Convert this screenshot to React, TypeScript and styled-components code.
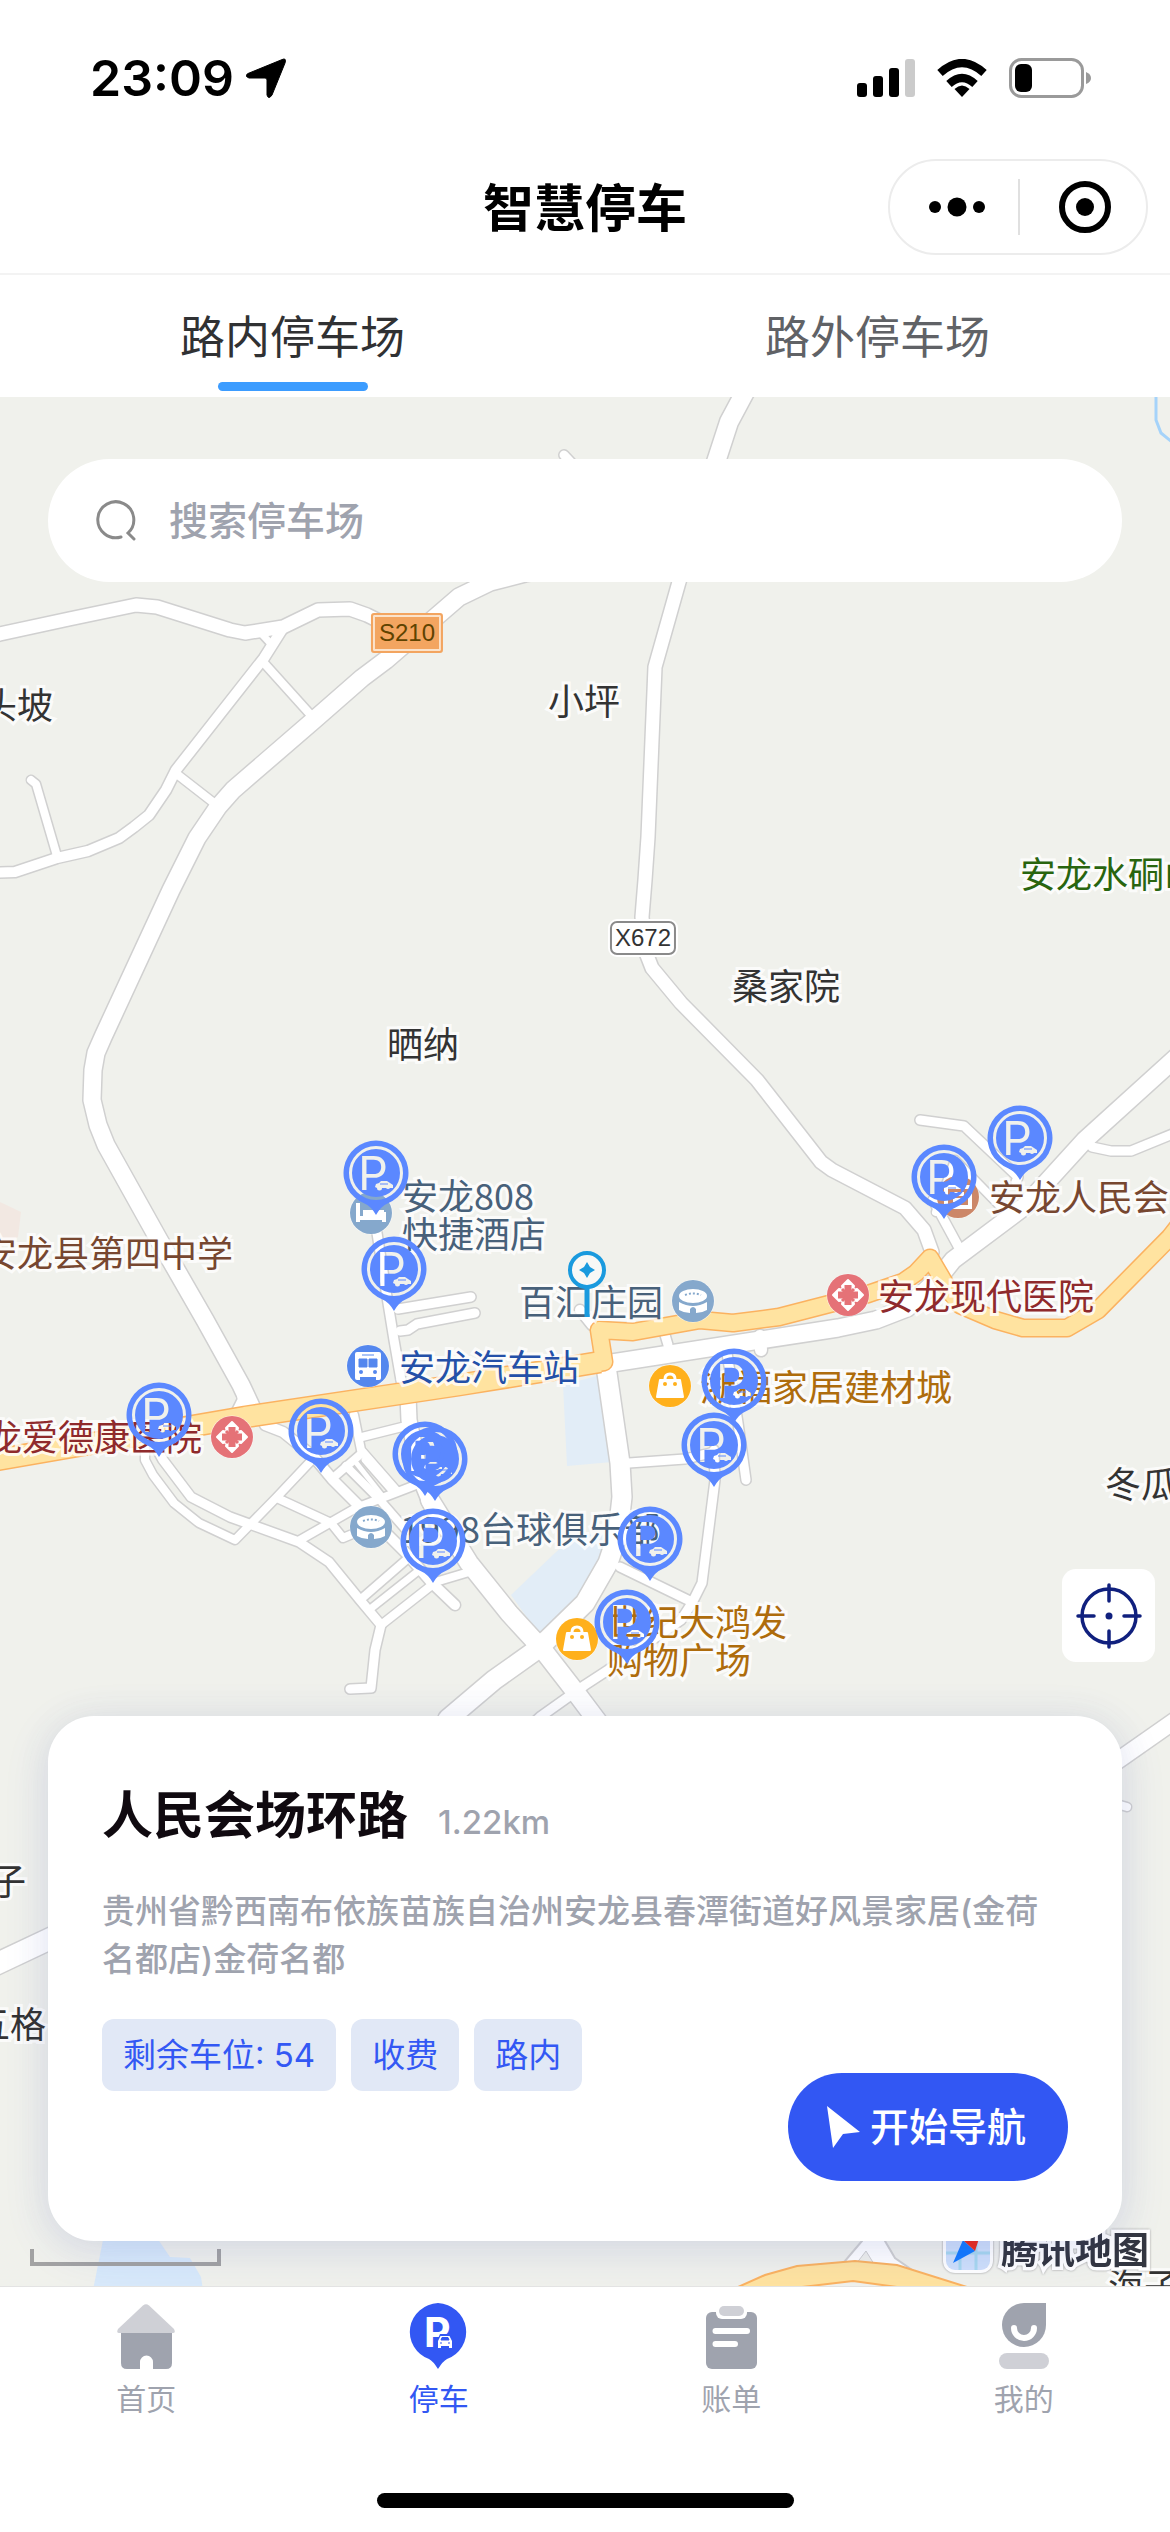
import React from "react";
import styled, { createGlobalStyle } from "styled-components";

const GlobalStyle = createGlobalStyle`
  *, *::before, *::after { box-sizing: border-box; }
  body {
    margin: 0;
    background: #fff;
    font-family: Inter, "Noto Sans CJK SC", sans-serif;
    color: #000;
  }
  button, input { font: inherit; }
  button { border: 0; padding: 0; background: none; cursor: pointer; }
`;

const MAP_WIDTH = 1170;
const MAP_TOP = 397;
const MAP_HEIGHT = 1889;

/* ---------- page frame ---------- */

const Page = styled.div`
  display: flex;
  flex-direction: column;
  min-height: 100vh;
`;

const StatusBar = styled.div`
  display: flex;
  align-items: center;
  justify-content: space-between;
  height: 156px;
  padding: 0 79px 0 90px;
`;

const Clock = styled.div`
  display: flex;
  align-items: center;
  gap: 12px;
  font-size: 50px;
  line-height: 60px;
  font-weight: 600;
`;

const StatusIcons = styled.div`
  display: flex;
  align-items: center;
  gap: 22px;
`;

const NavBar = styled.header`
  display: grid;
  grid-template-columns: 1fr auto 1fr;
  align-items: center;
  height: 119px;
  padding: 0 22px 15px;
  border-bottom: 2px solid #f3f3f3;
`;

const NavTitle = styled.h1`
  grid-column: 2;
  margin: 0;
  padding-top: 4px;
  font-size: 51px;
  line-height: 72px;
  font-weight: 700;
`;

const Capsule = styled.div`
  justify-self: end;
  display: flex;
  align-items: center;
  width: 260px;
  height: 96px;
  border: 2px solid #ececec;
  border-radius: 48px;
`;

const CapsuleButton = styled.button`
  flex: 1;
  display: flex;
  align-items: center;
  justify-content: center;
  height: 100%;
  padding-left: 6px;
  & + & { position: relative; }
  & + &::before {
    content: "";
    position: absolute;
    left: 0;
    top: 18px;
    bottom: 18px;
    width: 2px;
    background: #e0e0e0;
  }
`;

const Tabs = styled.nav`
  display: flex;
`;

const Tab = styled.button<{ $active?: boolean }>`
  flex: 1;
  display: flex;
  flex-direction: column;
  align-items: center;
  justify-content: space-between;
  height: 122px;
  padding: 33px 0 6px;
  font-size: 45px;
  line-height: 60px;
  color: ${(p) => (p.$active ? "#303133" : "#606266")};
  &::after {
    content: "";
    width: 150px;
    height: 9px;
    border-radius: 5px;
    background: ${(p) => (p.$active ? "#3c9cff" : "transparent")};
  }
`;

/* ---------- map ---------- */

const MapSection = styled.main`
  position: relative;
  flex: 1;
  display: flex;
  overflow: hidden;
  background: #f0f1ec;
`;

const MapCanvas = styled.div`
  position: absolute;
  inset: 0;
`;

const Roads = styled.svg`
  display: block;
  width: 100%;
  height: 100%;
`;

const Place = styled.div<{ $x: number; $y: number; $center?: boolean }>`
  position: absolute;
  left: ${(p) => (p.$x / MAP_WIDTH) * 100}%;
  top: ${(p) => ((p.$y - MAP_TOP) / MAP_HEIGHT) * 100}%;
  transform: translate(${(p) => (p.$center ? "-50%" : "0")}, -50%);
  display: flex;
`;

const MapLabel = styled.span<{ $color: string }>`
  padding-bottom: 6px;
  font-family: "Noto Sans CJK SC", sans-serif;
  font-size: 36px;
  line-height: 38px;
  white-space: pre;
  color: ${(p) => p.$color};
  -webkit-text-stroke: 6px rgba(255, 255, 255, 0.8);
  paint-order: stroke fill;
`;

const RoadBadge = styled.span<{ $major?: boolean }>`
  display: flex;
  align-items: center;
  justify-content: center;
  font-family: "Liberation Sans", Arial, sans-serif;
  font-size: 24px;
  line-height: 24px;
  ${(p) =>
    p.$major
      ? `padding: 6px;
         color: #5f4300;
         background: #f3a560;
         border: 2px solid #f3a560;
         border-radius: 3px;
         box-shadow: inset 0 0 0 2px #fbe3cb;`
      : `padding: 3px;
         color: #333;
         background: #fff;
         border: 2px solid #8a8a8a;
         border-radius: 7px;
         box-shadow: 0 0 0 2px #fff;`}
`;

const MapBrand = styled.div`
  display: flex;
  align-items: center;
  gap: 7px;
  font-family: "Noto Sans CJK SC", sans-serif;
  font-size: 37px;
  line-height: 48px;
  font-weight: 700;
  color: #333640;
  white-space: nowrap;
  -webkit-text-stroke: 7px #fff;
  paint-order: stroke fill;
  filter: drop-shadow(0 0 1px #999);
`;

const MapOverlay = styled.div`
  position: relative;
  flex: 1;
  display: flex;
  flex-direction: column;
  padding: 62px 15px 45px;
`;

const SearchBox = styled.label`
  display: flex;
  align-items: center;
  gap: 32px;
  height: 123px;
  margin: 0 33px;
  padding: 0 48px;
  border-radius: 62px;
  background: #fff;
`;

const SearchInput = styled.input`
  flex: 1;
  min-width: 0;
  border: 0;
  padding: 0;
  outline: none;
  background: transparent;
  font-size: 39px;
  line-height: 54px;
  font-weight: 500;
  &::placeholder { color: #9fa3ae; opacity: 1; }
`;

const LocateButton = styled.button`
  align-self: flex-end;
  display: flex;
  align-items: center;
  justify-content: center;
  width: 93px;
  height: 93px;
  margin-top: auto;
  margin-bottom: 54px;
  border-radius: 14px;
  background: #fff;
`;

/* ---------- parking card ---------- */

const Card = styled.section`
  margin: 0 33px;
  padding: 64px 54px 60px;
  border-radius: 46px;
  background: #fff;
  box-shadow: 0 9px 45px rgba(50, 70, 200, 0.13), 0 0 36px rgba(120, 120, 120, 0.06);
`;

const CardHead = styled.div`
  display: flex;
  align-items: baseline;
  gap: 30px;
`;

const CardTitle = styled.h2`
  margin: 0;
  font-size: 51px;
  line-height: 72px;
  font-weight: 700;
  color: #100a10;
`;

const Distance = styled.span`
  font-size: 33px;
  line-height: 48px;
  font-weight: 500;
  color: #9fa3ae;
`;

const Address = styled.p`
  margin: 35px 0 36px;
  font-size: 33px;
  line-height: 48px;
  font-weight: 500;
  color: #9fa3ae;
`;

const CardFoot = styled.div`
  display: flex;
  align-items: flex-start;
  justify-content: space-between;
`;

const Tags = styled.div`
  display: flex;
  gap: 15px;
`;

const Tag = styled.span`
  padding: 12px 21px;
  border-radius: 12px;
  background: #e1e8f6;
  color: #3358f4;
  font-size: 33px;
  line-height: 48px;
  white-space: nowrap;
`;

const NavigateButton = styled.button`
  display: flex;
  align-items: center;
  gap: 10px;
  height: 108px;
  margin-top: 54px;
  padding: 0 42px 0 39px;
  border-radius: 54px;
  background: #3257f3;
  color: #fff;
  font-size: 39px;
  line-height: 54px;
  font-weight: 500;
`;

/* ---------- bottom bar ---------- */

const BottomBar = styled.footer`
  display: flex;
  flex-direction: column;
  align-items: center;
  justify-content: space-between;
  height: 246px;
  padding-bottom: 24px;
  border-top: 1px solid #e3e3e3;
  background: #fff;
`;

const BottomNav = styled.nav`
  display: flex;
  align-self: stretch;
  padding-top: 16px;
`;

const BottomLink = styled.a<{ $active?: boolean }>`
  flex: 1;
  display: flex;
  flex-direction: column;
  align-items: center;
  gap: 9px;
  font-size: 30px;
  line-height: 42px;
  text-decoration: none;
  color: ${(p) => (p.$active ? "#3257f3" : "#9fa3ae")};
`;

const HomeIndicator = styled.div`
  width: 417px;
  max-width: 60%;
  height: 15px;
  border-radius: 8px;
  background: #000;
`;

/* ---------- map data ---------- */

const INK = "#333";
const BROWN = "#774730";
const SLATE = "#48617a";
const MAROON = "#8f2a2c";
const AMBER = "#ae6c0c";

const labels = [
  { x: -19, y: 706, color: INK, text: "头坡" },
  { x: 548, y: 702, color: INK, text: "小坪" },
  { x: 1020, y: 875, color: "#29650f", text: "安龙水硐山" },
  { x: 732, y: 987, color: INK, text: "桑家院" },
  { x: 387, y: 1045, color: INK, text: "晒纳" },
  { x: 402, y: 1216, color: SLATE, text: "安龙808\n快捷酒店" },
  { x: -19, y: 1254, color: BROWN, text: "安龙县第四中学" },
  { x: 519, y: 1303, color: SLATE, text: "百汇庄园" },
  { x: 399, y: 1368, color: "#2450a8", text: "安龙汽车站" },
  { x: 989, y: 1198, color: BROWN, text: "安龙人民会" },
  { x: 878, y: 1297, color: MAROON, text: "安龙现代医院" },
  { x: -50, y: 1438, color: MAROON, text: "安龙爱德康医院" },
  { x: 700, y: 1388, color: AMBER, text: "浙福家居建材城" },
  { x: 400, y: 1530, color: SLATE, text: "1998台球俱乐部" },
  { x: 1105, y: 1485, color: INK, text: "冬瓜" },
  { x: 607, y: 1642, color: AMBER, text: "世纪大鸿发\n购物广场" },
  { x: -10, y: 1882, color: INK, text: "子" },
  { x: -26, y: 2025, color: INK, text: "五格" },
  { x: 1108, y: 2287, color: INK, text: "海子" },
];

type PoiKind = "hotel" | "venue" | "bus" | "hospital" | "shop" | "hall";

const pois: { x: number; y: number; kind: PoiKind }[] = [
  { x: 371, y: 1213, kind: "hotel" },
  { x: 693, y: 1301, kind: "venue" },
  { x: 371, y: 1527, kind: "venue" },
  { x: 368, y: 1366, kind: "bus" },
  { x: 848, y: 1295, kind: "hospital" },
  { x: 232, y: 1437, kind: "hospital" },
  { x: 670, y: 1386, kind: "shop" },
  { x: 577, y: 1639, kind: "shop" },
  { x: 958, y: 1197, kind: "hall" },
];

const pins = [
  [376, 1173], [394, 1269], [1020, 1138], [944, 1177], [159, 1415], [321, 1431],
  [425, 1454], [435, 1459], [433, 1541], [734, 1381], [714, 1445], [650, 1539], [627, 1622],
];

/* [path, road width] */
const roads: [string, number][] = [
  ["M-10 636L0 634L69 619L136 605L157 607L230 630L245 633L283 627L318 610L350 609L367 615L383 623L405 640", 13],
  ["M283 628L264 658L176 770L166 790L149 815L134 827L119 838L88 851L57 858L15 872L-10 873", 10],
  ["M260 632L272 645", 7],
  ["M264 663L309 713", 8],
  ["M178 775L214 803", 8],
  ["M31 780L36 784L57 856", 8],
  ["M564 455L580 472", 9],
  ["M1016 1182L1018 1177L964 1126L920 1120", 9],
  ["M936 1212L955 1160L1000 1206", 8],
  ["M933 1200L958 1246", 9],
  ["M1086 1138L1092 1147L1111 1151L1131 1151L1180 1131", 9],
  ["M377 1233L387 1297L394 1340L402 1386", 9],
  ["M398 1309L471 1297", 9],
  ["M400 1331L408 1330L417 1324L475 1313", 9],
  ["M241 1385L241 1400L235 1412", 7],
  ["M145 1440L145 1460L153 1475L174 1503L199 1523L235 1540L276 1498L310 1462", 8],
  ["M152 1440L163 1460L191 1497L230 1517L299 1542L329 1562L360 1600L381 1625L375 1650L371 1688L350 1689", 9],
  ["M277 1498L331 1523L343 1538L362 1530", 8],
  ["M300 1540L356 1508L421 1483", 8],
  ["M354 1415L361 1450L396 1490", 8],
  ["M362 1437L406 1426", 8],
  ["M362 1453L333 1478", 8],
  ["M346 1466L380 1500L406 1530", 8],
  ["M354 1460L384 1498", 5],
  ["M364 1460L392 1492", 5],
  ["M406 1560L360 1600", 8],
  ["M417 1572L369 1610", 7],
  ["M432 1585L381 1625", 8],
  ["M432 1583L469 1572", 8],
  ["M265 1425L283 1432L314 1457L333 1480L360 1507L406 1553L432 1583L455 1605", 10],
  ["M629 1463L685 1459L715 1452", 9],
  ["M727 1353L738 1423L746 1480", 9],
  ["M714 1450L715 1480L702 1583L692 1603L681 1620L608 1670L585 1685L540 1717L520 1735", 9],
  ["M620 1567L692 1602", 9],
  ["M663 1328L668 1345", 9],
  ["M760 1336L761 1350", 12],
  ["M580 1310L592 1325", 10],
  ["M408 1396L409 1420L421 1480L432 1507L469 1563", 15],
  ["M1120 1805L1127 1807", 8],
];

const mainRoads: [string, number][] = [
  ["M600 560L525 573L490 582L459 597L430 622L386 660L362 678L314 720L233 790L218 807L197 838L171 890L103 1037L96 1053L93 1070L92 1100L98 1125L106 1145L159 1240L205 1320L241 1385L255 1415", 17],
  ["M745 392L729 422L715 465", 18],
  ["M716 462L679 582L655 667L648 837L645 880L642 917L645 950L652 968L681 1003L757 1080L821 1162L832 1170L905 1208L924 1230L932 1252", 13],
  ["M1180 1054L1085 1140L1025 1206L953 1260L937 1280L907 1308L876 1320L838 1328L612 1363", 17],
  ["M606 1366L620 1463L622 1497L618 1533L608 1563L585 1603L547 1640L532 1653L494 1680L448 1719", 19],
  ["M430 1500L469 1563L509 1613L543 1650L574 1690L598 1722", 18],
  ["M1180 1717L1110 1766", 16],
  ["M-10 1967L60 1934", 21],
];

/* ---------- drawings ---------- */

function PoiIcon({ kind }: { kind: PoiKind }) {
  const fill = { hotel: "#85a8cc", venue: "#85a8cc", bus: "#5487ee", hospital: "#e57277", shop: "#ffb01c", hall: "#cc8768" }[kind];
  return (
    <svg width="44" height="44" viewBox="-22 -22 44 44" aria-hidden="true">
      <circle r="21.5" fill="#fff" opacity=".7" />
      <circle r="21" fill={fill} />
      {kind === "hotel" && (
        <path d="M-13 -10V9M-13 5H13M13 9V-1" stroke="#fff" strokeWidth="4" fill="none" />
      )}
      {kind === "hotel" && <path d="M-8 -3H13V6H-8Z" fill="#fff" />}
      {kind === "venue" && (
        <g fill="#fff">
          <ellipse cy="-5" rx="14" ry="7" />
          <path d="M-14 1Q0 9 14 1V9Q9 12 3 12V8Q0 4 -3 8V12Q-9 12 -14 9Z" />
          <path d="M-8 -6Q0 -9 8 -6" stroke={fill} strokeWidth="2" strokeDasharray="2 2" fill="none" />
        </g>
      )}
      {kind === "bus" && (
        <g>
          <path d="M-11 -14H11Q13 -14 13 -12V12Q13 14 11 14H8V11H-8V14H-11Q-13 14 -13 12V-12Q-13 -14 -11 -14Z" fill="#fff" />
          <path d="M-6 -11H6M-9 -7H-1V1H-9ZM1 -7H9V1H1Z" fill={fill} stroke={fill} strokeWidth="1" />
          <circle cx="-7" cy="6" r="2" fill={fill} />
          <circle cx="7" cy="6" r="2" fill={fill} />
        </g>
      )}
      {kind === "hospital" && (
        <g>
          <path d="M0 -15L6 -9L5 -5L9 -6L15 0L9 6L5 5L6 9L0 15L-6 9L-5 5L-9 6L-15 0L-9 -6L-5 -5L-6 -9Z" fill="#fff" stroke="#fff" strokeWidth="2" strokeLinejoin="round" />
          <path d="M0 -10V10M-10 0H10" stroke={fill} strokeWidth="7" />
          <path d="M-6 -6L6 6M6 -6L-6 6" stroke={fill} strokeWidth="3" />
        </g>
      )}
      {kind === "shop" && (
        <g>
          <path d="M-10 -6H10L13 11H-13Z" fill="#fff" stroke="#fff" strokeWidth="2" strokeLinejoin="round" />
          <path d="M-5 -7Q-5 -12 0 -12Q5 -12 5 -7" fill="none" stroke="#fff" strokeWidth="3" />
          <circle cx="-5" cy="-2" r="2" fill={fill} />
          <circle cx="5" cy="-2" r="2" fill={fill} />
        </g>
      )}
      {kind === "hall" && (
        <path d="M-12 -10H12V10H-12ZM-6 -3H6M-5 3H5" fill="none" stroke="#fff" strokeWidth="4" />
      )}
    </svg>
  );
}

function ParkingPin() {
  return (
    <svg width="66" height="82" viewBox="-33 -33 66 82" aria-hidden="true">
      <g mask="url(#pin-cutout)">
        <path d="M0 -32.500A32.500 32.500 0 0 1 12 30.200Q5 33 0 42Q-5 33 -12 30.200A32.500 32.500 0 0 1 0 -32.500Z" fill="#5b88ff" />
      </g>
    </svg>
  );
}

function MapDrawing() {
  return (
    <Roads viewBox={`0 ${MAP_TOP} ${MAP_WIDTH} ${MAP_HEIGHT}`} preserveAspectRatio="none" aria-hidden="true">
      <defs>
        <mask id="pin-cutout" maskUnits="userSpaceOnUse" x="-34" y="-34" width="68" height="84">
          <rect x="-34" y="-34" width="68" height="84" fill="#fff" />
          <circle r="25.500" fill="none" stroke="#000" strokeWidth="3" />
          <text x="-18" y="17" fontFamily="Inter, sans-serif" fontSize="47" fontWeight="400" fill="#000">P</text>
          <path d="M-1 14L0 11L3 10L5 8H11L14 10L17 12V15H14A2.500 2.500 0 0 1 10 15H6A2.500 2.500 0 0 1 1 15Z" fill="#000" />
          <path d="M4 11H12" stroke="#fff" strokeWidth="1" />
        </mask>
      </defs>

      <g fill="#e2edf7">
        <path d="M563 1385L567 1466L612 1462L600 1375Z" />
        <path d="M511 1595L555 1553L575 1535L615 1533L612 1570L585 1610L543 1640Z" />
        <path d="M104 2235H155L170 2257L190 2258L201 2277L203 2290H93Z" fill="#d8e9fa" />
      </g>
      <path d="M0 1202L21 1212L18 1237L0 1248Z" fill="#f2e8e2" />
      <path d="M1156 390V420L1161 433L1172 442" fill="none" stroke="#a5d3fa" strokeWidth="3" />

      <g fill="none" stroke="#d0d0d0" strokeLinejoin="round" strokeLinecap="round">
        {[...roads, ...mainRoads].map(([d, w], i) => (
          <path key={i} d={d} strokeWidth={w + 3} />
        ))}
      </g>
      <g fill="none" stroke="#fff" strokeLinejoin="round" strokeLinecap="round">
        {[...roads, ...mainRoads].map(([d, w], i) => (
          <path key={i} d={d} strokeWidth={w} />
        ))}
      </g>

      <path d="M858 2230L862 2241L845 2261L830 2272H915L895 2258L885 2241L880 2230Z" fill="#fff" stroke="#d0d0d0" strokeWidth="2" />
      <path d="M866 2251L856 2264H874Z" fill="#f0f1ec" stroke="#d0d0d0" strokeWidth="1" />

      <g fill="none" strokeLinejoin="round">
        {["#fbb260", "#ffe3a0"].map((c, i) => (
          <g key={c} stroke={c}>
            <path strokeWidth={i ? 16 : 19} strokeLinecap="round" d="M1180 1224L1170 1237L1098 1310L1067 1328L1023 1328L995 1320L960 1305L947 1287L930 1258L916 1273L903 1282L868 1294L779 1317L733 1323L700 1320L633 1332L599 1330L604 1362L570 1367" />
            <path strokeWidth={i ? 20 : 23} d="M-10 1461L245 1417L459 1385L570 1367L600 1362" />
          </g>
        ))}
      </g>
      <path d="M738 2287L765 2275L797 2266L855 2261L897 2265L967 2287H897L853 2281L802 2287Z" fill="#ffe3a0" stroke="#fbb260" strokeWidth="2" />
      <path d="M32 2249V2264H219V2249" fill="none" stroke="#a3a3a3" strokeWidth="4" />
    </Roads>
  );
}

function CurrentPosition() {
  return (
    <svg width="40" height="68" viewBox="0 0 40 68" aria-hidden="true">
      <circle cx="20" cy="20" r="17" fill="#fff" fillOpacity=".5" stroke="#1a9ade" strokeWidth="4" />
      <path d="M20 12L23 17L28 20L23 23L20 28L17 23L12 20L17 17Z" fill="#1a9ade" />
      <path d="M20 38V67" stroke="#1a9ade" strokeWidth="5" />
    </svg>
  );
}

function BrandMark() {
  return (
    <svg width="52" height="52" viewBox="0 0 52 52" aria-hidden="true">
      <rect x="1" y="1" width="50" height="50" rx="12" fill="#fff" />
      <rect x="4" y="4" width="44" height="44" rx="9" fill="#cfe0fb" />
      <path d="M4 31H48M34 4V48M18 31V48" stroke="#a8d8f0" strokeWidth="3" />
      <path d="M11 41L21 18L33 29Z" fill="#147aff" />
      <path d="M21 18L41 4L33 29Z" fill="#ee2a18" />
    </svg>
  );
}

function HomeIcon() {
  return (
    <svg width="66" height="66" viewBox="0 0 66 66" aria-hidden="true">
      <path d="M8 29H59V60Q59 66 53 66H40V59A6.500 6.500 0 0 0 27 59V66H14Q8 66 8 60Z" fill="#9fa3ae" />
      <path d="M30 2.500Q33 0 36 2.500L61 26Q63 30 60 30H6Q3 30 5 26Z" fill="#cfd0d6" />
    </svg>
  );
}

function ParkingIcon() {
  return (
    <svg width="66" height="66" viewBox="0 0 66 66" aria-hidden="true">
      <path d="M32 0A30 29 0 0 1 41 56Q37 58 32 66Q27 58 23 56A30 29 0 0 1 32 0Z" fill="#3257f3" />
      <text x="18" y="44" fontFamily="Inter, sans-serif" fontSize="41" fontWeight="700" fill="#fff">P</text>
      <path d="M31 45V38L34 31H45L48 38V45Z" fill="#3257f3" />
      <path d="M32 45V38L34.500 33H43.500L46 38V45H43V43H35V45Z" fill="#fff" />
      <path d="M35 37L36 34.500H42L43 37ZM34 40H36M42 40H44" fill="#3257f3" stroke="#3257f3" strokeWidth="1" />
    </svg>
  );
}

function BillIcon() {
  return (
    <svg width="66" height="66" viewBox="0 0 66 66" aria-hidden="true">
      <rect x="8" y="9" width="51" height="57" rx="6" fill="#9fa3ae" />
      <rect x="18" y="0" width="31" height="16" rx="6" fill="#fff" />
      <rect x="21" y="3" width="25" height="10" rx="5" fill="#cfd0d6" />
      <path d="M17.500 28H49M17.500 41H37" stroke="#fff" strokeWidth="6" strokeLinecap="round" />
    </svg>
  );
}

function ProfileIcon() {
  return (
    <svg width="66" height="66" viewBox="0 0 66 66" aria-hidden="true">
      <path d="M33 0H55V22A22 22 0 1 1 33 0Z" fill="#9fa3ae" />
      <path d="M23 25A10 10 0 0 0 43 25" fill="none" stroke="#fff" strokeWidth="6" strokeLinecap="round" />
      <rect x="8" y="50" width="50" height="16" rx="8" fill="#cfd0d6" />
    </svg>
  );
}

const bottomLinks = [
  { name: "首页", Icon: HomeIcon },
  { name: "停车", Icon: ParkingIcon, active: true },
  { name: "账单", Icon: BillIcon },
  { name: "我的", Icon: ProfileIcon },
];

export default function App() {
  return (
    <Page>
      <GlobalStyle />
      <StatusBar>
        <Clock>
          23:09
          <svg width="40" height="40" viewBox="0 0 40 40" aria-hidden="true">
            <path d="M35 2Q41 -1 39 5L26 37Q22.500 42 21 37V22Q21 20 19 20H3Q-2 18 2 15.500Z" stroke="#000" strokeWidth="1" strokeLinejoin="round" />
          </svg>
        </Clock>
        <StatusIcons>
          <svg width="58" height="38" viewBox="0 0 58 38" aria-hidden="true">
            <rect x="0" y="24" width="10" height="14" rx="3" />
            <rect x="16" y="17" width="10" height="21" rx="3" />
            <rect x="32" y="9" width="10" height="29" rx="3" />
            <rect x="48" y="0" width="10" height="38" rx="3" fill="#cbcbcb" />
          </svg>
          <svg width="50" height="38" viewBox="0 0 50 38" aria-hidden="true">
            <path d="M25 38L17.500 30Q25 23 32.500 30Z" />
            <path d="M12 25Q25 13 38 25" fill="none" stroke="#000" strokeWidth="8" />
            <path d="M3 14Q25 -6 47 14" fill="none" stroke="#000" strokeWidth="8" />
          </svg>
          <svg width="82" height="40" viewBox="0 0 82 40" aria-hidden="true">
            <rect x="1.500" y="1.500" width="72" height="37" rx="11" fill="none" stroke="#9a9a9a" strokeWidth="3" />
            <path d="M77 14Q82 16 82 20Q82 24 77 26Z" fill="#9a9a9a" />
            <rect x="6" y="6" width="17" height="28" rx="6" />
          </svg>
        </StatusIcons>
      </StatusBar>

      <NavBar>
        <NavTitle>智慧停车</NavTitle>
        <Capsule>
          <CapsuleButton aria-label="更多">
            <svg width="58" height="20" viewBox="0 0 58 20" aria-hidden="true">
              <circle cx="7" cy="10" r="6" />
              <circle cx="29" cy="10" r="9.500" />
              <circle cx="51" cy="10" r="6" />
            </svg>
          </CapsuleButton>
          <CapsuleButton aria-label="关闭">
            <svg width="52" height="52" viewBox="0 0 52 52" aria-hidden="true">
              <circle cx="26" cy="26" r="23" fill="none" stroke="#000" strokeWidth="6" />
              <circle cx="26" cy="26" r="9" />
            </svg>
          </CapsuleButton>
        </Capsule>
      </NavBar>

      <Tabs>
        <Tab $active>路内停车场</Tab>
        <Tab>路外停车场</Tab>
      </Tabs>

      <MapSection>
        <MapCanvas>
          <MapDrawing />
          {pois.map((p) => (
            <Place key={`${p.x}-${p.y}`} $x={p.x} $y={p.y} $center>
              <PoiIcon kind={p.kind} />
            </Place>
          ))}
          {labels.map((l) => (
            <Place key={l.text} $x={l.x} $y={l.y}>
              <MapLabel $color={l.color}>{l.text}</MapLabel>
            </Place>
          ))}
          <Place $x={407} $y={633} $center>
            <RoadBadge $major>S210</RoadBadge>
          </Place>
          <Place $x={643} $y={938} $center>
            <RoadBadge>X672</RoadBadge>
          </Place>
          <Place $x={587} $y={1284} $center>
            <CurrentPosition />
          </Place>
          {pins.map(([x, y]) => (
            <Place key={`${x}-${y}`} $x={x} $y={y + 8} $center>
              <ParkingPin />
            </Place>
          ))}
          <Place $x={942} $y={2248}>
            <MapBrand>
              <BrandMark />
              腾讯地图
            </MapBrand>
          </Place>
        </MapCanvas>

        <MapOverlay>
          <SearchBox>
            <svg width="41" height="41" viewBox="0 0 41 41" aria-hidden="true">
              <path d="M25 37A18 18 0 1 1 32 33L38 39" fill="none" stroke="#8a8a8a" strokeWidth="3" strokeLinecap="round" />
            </svg>
            <SearchInput type="search" placeholder="搜索停车场" aria-label="搜索停车场" />
          </SearchBox>

          <LocateButton aria-label="定位">
            <svg width="66" height="66" viewBox="-33 -33 66 66" aria-hidden="true">
              <g fill="none" stroke="#10207e" strokeWidth="3.500" strokeLinecap="round">
                <circle r="27" />
                <path d="M0 -31V-15M0 31V15M-31 0H-15M31 0H15" />
              </g>
              <circle r="3.500" fill="#10207e" />
            </svg>
          </LocateButton>

          <Card>
            <CardHead>
              <CardTitle>人民会场环路</CardTitle>
              <Distance>1.22km</Distance>
            </CardHead>
            <Address>贵州省黔西南布依族苗族自治州安龙县春潭街道好风景家居(金荷名都店)金荷名都</Address>
            <CardFoot>
              <Tags>
                <Tag>剩余车位: 54</Tag>
                <Tag>收费</Tag>
                <Tag>路内</Tag>
              </Tags>
              <NavigateButton>
                <svg width="33" height="42" viewBox="0 0 33 42" aria-hidden="true">
                  <path d="M0 0L33 26L16 28L6 42Z" fill="#fff" />
                </svg>
                开始导航
              </NavigateButton>
            </CardFoot>
          </Card>
        </MapOverlay>
      </MapSection>

      <BottomBar>
        <BottomNav>
          {bottomLinks.map(({ name, Icon, active }) => (
            <BottomLink key={name} href="#" $active={active}>
              <Icon />
              {name}
            </BottomLink>
          ))}
        </BottomNav>
        <HomeIndicator />
      </BottomBar>
    </Page>
  );
}
